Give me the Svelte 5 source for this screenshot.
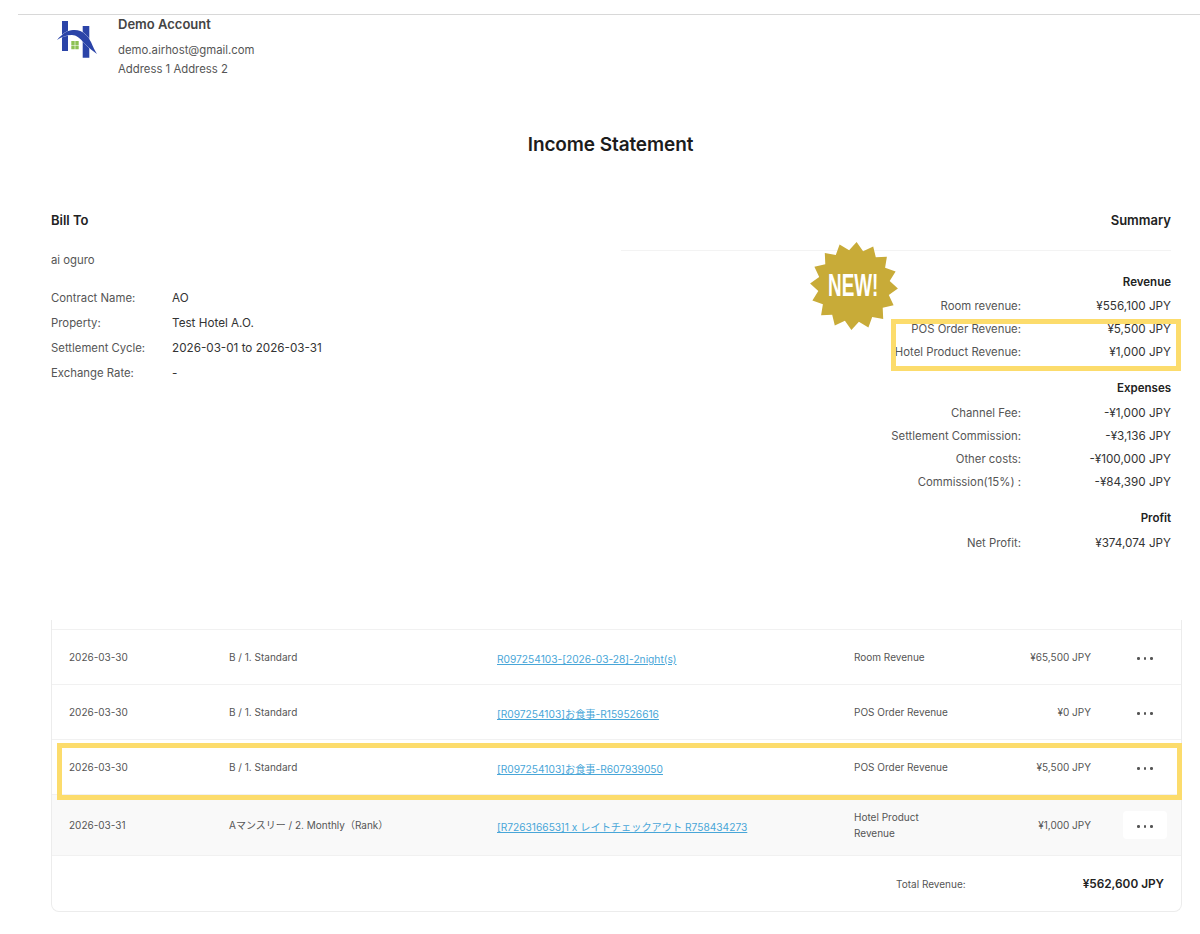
<script lang="ts">
const summary = [
  { title: "Revenue", rows: [["Room revenue:", "¥556,100 JPY"], ["POS Order Revenue:", "¥5,500 JPY"], ["Hotel Product Revenue:", "¥1,000 JPY"]] },
  { title: "Expenses", rows: [["Channel Fee:", "-¥1,000 JPY"], ["Settlement Commission:", "-¥3,136 JPY"], ["Other costs:", "-¥100,000 JPY"], ["Commission(15%) :", "-¥84,390 JPY"]] },
  { title: "Profit", rows: [["Net Profit:", "¥374,074 JPY"]] }
];

const details = [
  ["Contract Name:", "AO"],
  ["Property:", "Test Hotel A.O."],
  ["Settlement Cycle:", "2026-03-01 to 2026-03-31"],
  ["Exchange Rate:", "-"]
];

const rows = [
  { date: "2026-03-30", room: "B / 1. Standard", link: "R097254103-[2026-03-28]-2night(s)", type: "Room Revenue", amount: "¥65,500 JPY" },
  { date: "2026-03-30", room: "B / 1. Standard", link: "[R097254103]お食事-R159526616", type: "POS Order Revenue", amount: "¥0 JPY" },
  { date: "2026-03-30", room: "B / 1. Standard", link: "[R097254103]お食事-R607939050", type: "POS Order Revenue", amount: "¥5,500 JPY" },
  { date: "2026-03-31", room: "Aマンスリー / 2. Monthly（Rank）", link: "[R726316653]1 x レイトチェックアウト R758434273", type: "Hotel Product Revenue", amount: "¥1,000 JPY", hover: true }
];

// 16 point star for the badge
const star = Array.from({ length: 32 }, (_, i) => {
  const r = i % 2 ? 36 : 44;
  const a = (i * Math.PI) / 16 - Math.PI / 2 + 0.06;
  return `${(45 + r * Math.cos(a)).toFixed(1)},${(45 + r * Math.sin(a)).toFixed(1)}`;
}).join(" ");
</script>

<div class="page">
  <header class="account">
    <svg class="logo" viewBox="0 0 41 39" aria-hidden="true">
      <path d="M4 1h6v30H4z M24.700 6h6.600v31.700h-6.600z" fill="#2b44a8" />
      <path d="M-1 20C4 14 10 10 15 10c9-1 15 6 18 12 2 5 4 9 6 12-4-3-8-6-12-10-5-6-9-9-13-9-6 0-11 2-15 5z" fill="#2b44a8" stroke="#fff" stroke-width="0.6" paint-order="stroke" />
      <path d="M13.300 21h3.400v3.900h-3.400z M17.300 21h3.400v3.900h-3.400z M13.300 25.400h3.400v3.900h-3.400z M17.300 25.400h3.400v3.900h-3.400z" fill="#8cc152" />
    </svg>
    <div class="account-text">
      <h2>Demo Account</h2>
      <p>demo.airhost@gmail.com</p>
      <p>Address 1 Address 2</p>
    </div>
  </header>

  <h1>Income Statement</h1>

  <section class="columns">
    <div class="bill">
      <h3>Bill To</h3>
      <p class="name">ai oguro</p>
      <dl>
        {#each details as [label, value]}
          <dt>{label}</dt>
          <dd>{value}</dd>
        {/each}
      </dl>
    </div>

    <div class="summary">
      <h3>Summary</h3>
      <svg class="badge" viewBox="0 0 90 90" aria-hidden="true">
        <polygon points={star} fill="#c8ab38" />
      </svg>
      <span class="badge-text">NEW!</span>
      <span class="mark mark-summary"></span>
      {#each summary as group}
        <div class="group">
          <h4>{group.title}</h4>
          {#each group.rows as [label, value]}
            <div class="line">
              <span class="line-label">{label}</span>
              <span class="line-value">{value}</span>
            </div>
          {/each}
        </div>
      {/each}
    </div>
  </section>

  <section class="card">
    <span class="mark mark-row"></span>
    {#each rows as row}
      <div class="row" class:hover={row.hover}>
        <span class="cell">{row.date}</span>
        <span class="cell">{row.room}</span>
        <span class="cell link-cell"><a href="#top">{row.link}</a></span>
        <span class="cell type">{row.type}</span>
        <span class="cell amount">{row.amount}</span>
        <span class="more"><span class="dots"><i></i><i></i><i></i></span></span>
      </div>
    {/each}
    <div class="total">
      <span class="total-label">Total Revenue:</span>
      <strong>¥562,600 JPY</strong>
    </div>
  </section>
</div>

<style>
  :global(body) {
    margin: 0;
    background: #fff;
  }

  .page {
    position: relative;
    height: 934px;
    overflow: hidden;
    padding: 14px 18px 0 51px;
    box-sizing: border-box;
    font-family: Inter, "Noto Sans CJK JP", sans-serif;
    font-size: 11.35px;
    color: #555;
  }

  .account {
    display: flex;
    margin: 0 -18px 0 -33px;
    padding: 0 0 0 40px;
    border-top: 1px solid #d8d8d8;
    height: 70px;
  }

  .logo {
    width: 41px;
    height: 39px;
    margin-top: 5px;
    flex: none;
    overflow: visible;
  }

  .account-text {
    margin-left: 19px;
  }

  .account-text h2 {
    margin: 1px 0 9px;
    font-size: 13px;
    line-height: 16px;
    font-weight: 600;
    color: #444;
  }

  .account-text p {
    margin: 0;
    line-height: 19px;
  }

  h1 {
    margin: 45px 0 0;
    font-size: 19px;
    line-height: 30px;
    font-weight: 600;
    color: #1c1c1c;
    text-align: center;
    padding-right: 12px;
    letter-spacing: -0.1px;
  }

  .columns {
    display: flex;
    justify-content: space-between;
    margin-top: 52px;
    margin-right: 11px;
    height: 408px;
  }

  h3 {
    margin: 0;
    font-size: 13px;
    line-height: 16px;
    font-weight: 600;
    color: #222;
  }

  .name {
    margin: 24px 0 0;
    line-height: 16px;
  }

  dl {
    display: grid;
    grid-template-columns: 121px auto;
    row-gap: 7px;
    margin: 21px 0 0;
    line-height: 18px;
  }

  dt, dd {
    margin: 0;
  }

  dd {
    font-size: 11.7px;
    color: #333;
  }

  .summary {
    position: relative;
    width: 550px;
  }

  .summary h3 {
    text-align: right;
    padding-bottom: 22px;
    border-bottom: 1px solid #f3f3f3;
  }

  .group {
    margin-bottom: 20px;
  }

  h4 {
    margin: 22.5px 0 0;
    font-size: 11.5px;
    line-height: 16px;
    font-weight: 600;
    color: #222;
    text-align: right;
  }

  .group + .group h4 {
    margin-top: 0;
  }

  .line {
    display: flex;
    justify-content: flex-end;
    margin-top: 7px;
    line-height: 16px;
  }

  h4 + .line {
    margin-top: 8.7px;
  }

  .line-label {
    text-align: right;
  }

  .line-value {
    width: 150px;
    font-size: 11.7px;
    text-align: right;
    color: #333;
  }

  .badge {
    position: absolute;
    left: 188px;
    top: 29px;
    width: 90px;
    height: 90px;
  }

  .badge-text {
    position: absolute;
    left: 207px;
    top: 57px;
    font-family: "Liberation Sans", sans-serif;
    font-size: 32px;
    font-weight: 700;
    line-height: 32px;
    color: #fff;
    transform: scaleX(0.59);
    transform-origin: left center;
    white-space: nowrap;
  }

  .mark {
    position: absolute;
    border: 5px solid #fcdc6c;
    box-sizing: border-box;
    pointer-events: none;
    z-index: 2;
  }

  .mark-summary {
    left: 270px;
    top: 107px;
    width: 290px;
    height: 52px;
  }

  .card {
    position: relative;
    border: 1px solid #ececec;
    border-top: 0;
    border-radius: 0 0 8px 8px;
    height: 292px;
    padding-top: 9px;
    box-sizing: border-box;
    font-size: 10px;
  }

  .mark-row {
    left: 5px;
    right: -1px;
    top: 123px;
    height: 57px;
  }

  .row {
    display: grid;
    grid-template-columns: 160px 268px 357px 120px 117px 1fr;
    align-items: center;
    height: 55px;
    padding-left: 17px;
    border-top: 1px solid #f1f1f1;
    box-sizing: border-box;
    color: #555;
  }

  .row.hover {
    height: 62px;
    background: #f9f9f9;
    border-bottom: 1px solid #f1f1f1;
  }

  .cell {
    line-height: 16px;
  }

  .link-cell {
    margin-top: 3px;
  }

  .link-cell a {
    font-size: 10.2px;
    color: #48a6d8;
    white-space: nowrap;
  }

  .type {
    max-width: 100px;
  }

  .amount {
    text-align: right;
  }

  .more {
    display: flex;
    justify-content: center;
    align-items: center;
    width: 44px;
    height: 28px;
    margin-left: 32px;
    border-radius: 4px;
  }

  .hover .more {
    background: #fff;
  }

  .dots {
    display: flex;
    gap: 4px;
    margin-top: 3px;
  }

  .dots i {
    width: 2.5px;
    height: 2.5px;
    border-radius: 50%;
    background: #555;
  }

  .total {
    display: flex;
    align-items: center;
    justify-content: flex-end;
    height: 56px;
    padding-right: 17px;
  }

  .total-label {
    margin-right: 117px;
  }

  .total strong {
    font-size: 11.8px;
    font-weight: 600;
    color: #222;
  }
</style>
